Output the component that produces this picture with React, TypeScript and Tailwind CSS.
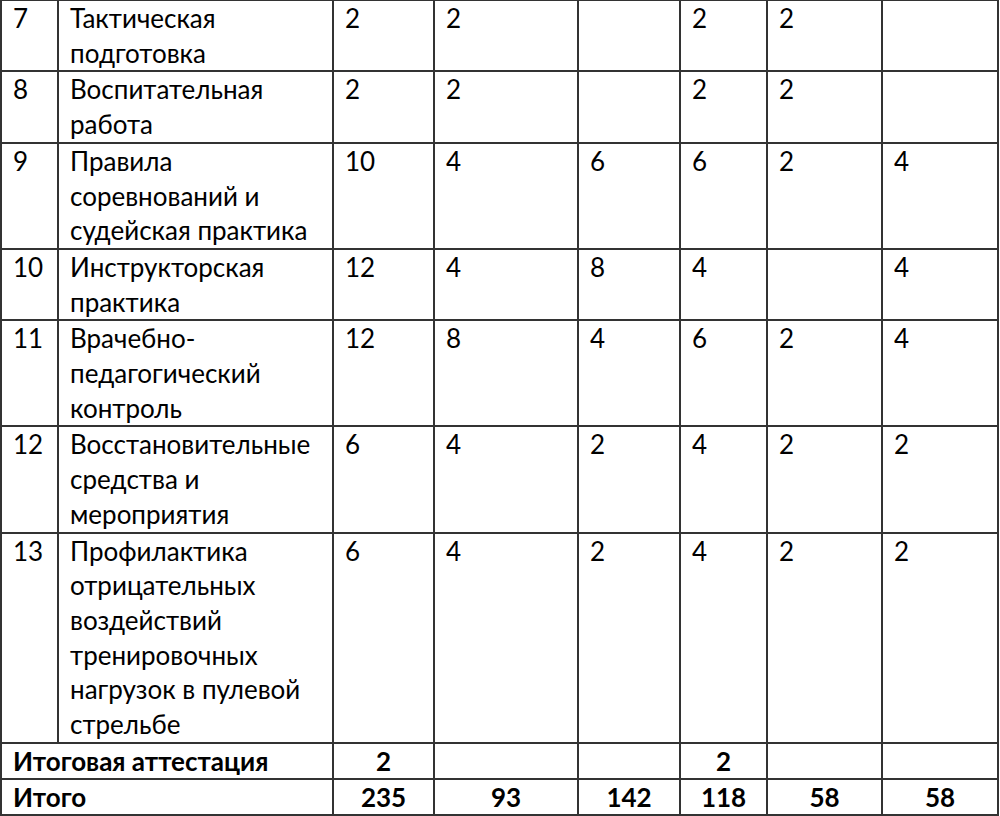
import React from 'react';

type Row = {
  num: string;
  name: string[];
  values: string[];
};

// Rows of the topic table; each name line is kept as it wraps in the source
const rows: Row[] = [
  { num: '7', name: ['Тактическая', 'подготовка'], values: ['2', '2', '', '2', '2', ''] },
  { num: '8', name: ['Воспитательная', 'работа'], values: ['2', '2', '', '2', '2', ''] },
  { num: '9', name: ['Правила', 'соревнований и', 'судейская практика'], values: ['10', '4', '6', '6', '2', '4'] },
  { num: '10', name: ['Инструкторская', 'практика'], values: ['12', '4', '8', '4', '', '4'] },
  { num: '11', name: ['Врачебно-', 'педагогический', 'контроль'], values: ['12', '8', '4', '6', '2', '4'] },
  { num: '12', name: ['Восстановительные', 'средства и', 'мероприятия'], values: ['6', '4', '2', '4', '2', '2'] },
  {
    num: '13',
    name: ['Профилактика', 'отрицательных', 'воздействий', 'тренировочных', 'нагрузок в пулевой', 'стрельбе'],
    values: ['6', '4', '2', '4', '2', '2'],
  },
];

const totals = [
  { label: 'Итоговая аттестация', values: ['2', '', '', '2', '', ''] },
  { label: 'Итого', values: ['235', '93', '142', '118', '58', '58'] },
];

const cell = 'border-2 border-[#333] align-top pl-[11px] pr-1 py-0';

export default function App() {
  return (
    <div className="w-[1000px] h-[816px] overflow-hidden bg-white text-black font-['Lato','Open_Sans',sans-serif]">
      <table className="table-fixed border-collapse w-[997px] -mt-[1px] text-[26px] leading-[34.7px]">
        <colgroup>
          <col className="w-[57px]" />
          <col className="w-[275px]" />
          <col className="w-[101px]" />
          <col className="w-[144px]" />
          <col className="w-[102px]" />
          <col className="w-[87px]" />
          <col className="w-[115px]" />
          <col className="w-[116px]" />
        </colgroup>
        <tbody>
          {rows.map((row) => (
            <tr key={row.num}>
              <td className={cell}>{row.num}</td>
              <td className={cell}>
                {row.name.map((line, i) => (
                  <div key={i} className="whitespace-nowrap">
                    {line}
                  </div>
                ))}
              </td>
              {row.values.map((v, i) => (
                <td key={i} className={cell}>
                  {v}
                </td>
              ))}
            </tr>
          ))}
          {totals.map((t) => (
            <tr key={t.label} className="font-bold leading-[34px]">
              <td colSpan={2} className={cell}>
                {t.label}
              </td>
              {t.values.map((v, i) => (
                <td key={i} className="border-2 border-[#333] align-top text-center p-0">
                  {v}
                </td>
              ))}
            </tr>
          ))}
        </tbody>
      </table>
    </div>
  );
}
